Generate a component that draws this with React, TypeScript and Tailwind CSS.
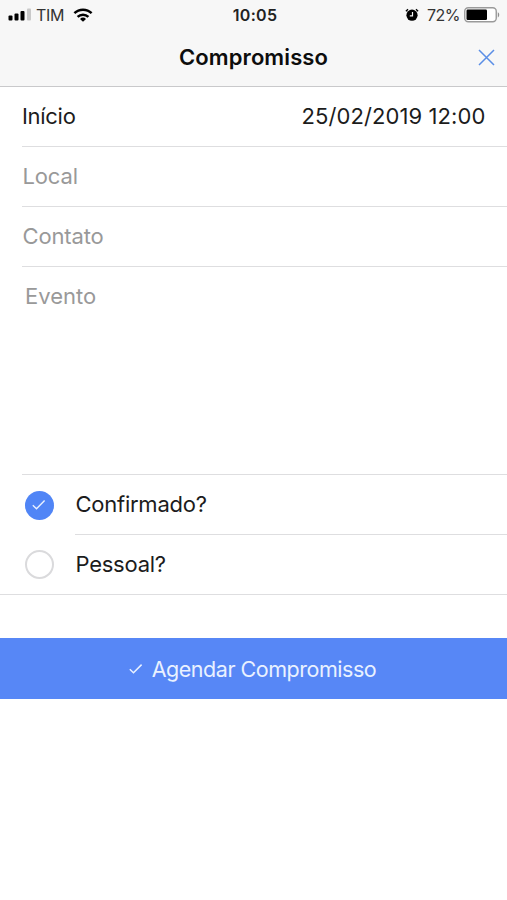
import React from 'react';

function SignalIcon() {
  return (
    <svg width="23" height="13" viewBox="0 0 23 13" aria-hidden="true">
      <rect x="0.5" y="7.5" width="4" height="5" rx="1" fill="#000" />
      <rect x="6.5" y="5.5" width="4" height="7" rx="1" fill="#000" />
      <rect x="12.5" y="3" width="4" height="9.5" rx="1" fill="#000" />
      <rect x="19" y="0.5" width="4" height="12" rx="1" fill="#c9c9c9" />
    </svg>
  );
}

function WifiIcon() {
  return (
    <svg width="20" height="14" viewBox="0 0 20 14" fill="none" stroke="#000" strokeWidth="2.5" aria-hidden="true">
      <path d="M1.4 5.2a12.4 12.4 0 0 1 17.2 0" />
      <path d="M4.6 8.8a7.8 7.8 0 0 1 10.8 0" />
      <path d="M10 13.8 7 10.9a4.3 4.3 0 0 1 6 0z" fill="#000" stroke="none" />
    </svg>
  );
}

function AlarmIcon() {
  return (
    <svg width="14" height="14" viewBox="0 0 14 14" fill="none" aria-hidden="true">
      <circle cx="7" cy="7.2" r="5.6" fill="#000" />
      <path d="M0.9 3.2 3 1.2M13.1 3.2 11 1.2" stroke="#000" strokeWidth="1.3" />
      <path d="M7.5 4v3.8H4.8" stroke="#f7f7f7" strokeWidth="1.2" />
    </svg>
  );
}

function BatteryIcon() {
  return (
    <svg width="36" height="16" viewBox="0 0 36 16" fill="none" aria-hidden="true">
      <rect x="0.75" y="0.75" width="31.5" height="14" rx="3.5" fill="#fff" stroke="#9a9a9a" strokeWidth="1.4" />
      <rect x="2.5" y="2.5" width="20.5" height="10.5" rx="1.2" fill="#000" />
      <path d="M33.8 5.3c1.9.8 1.9 4.3 0 5.1z" fill="#8e8e8e" />
    </svg>
  );
}

function StatusBar() {
  return (
    <div className="grid h-[29px] grid-cols-3 items-center pl-2 pr-[7px] text-base text-[#333]">
      <div className="flex items-center">
        <SignalIcon />
        <span className="ml-[5px] tracking-[-0.3px]">TIM</span>
        <span className="ml-[8.5px]">
          <WifiIcon />
        </span>
      </div>
      <span className="pl-[2px] text-center font-semibold tracking-[0.3px] text-[#222]">10:05</span>
      <div className="flex items-center justify-end">
        <AlarmIcon />
        <span className="ml-[8px] mr-1 tracking-[-0.5px]">72%</span>
        <BatteryIcon />
      </div>
    </div>
  );
}

function Header() {
  return (
    <header className="h-[87px] border-b border-[#c9c9cb] bg-[#f7f7f7]">
      <StatusBar />
      <div className="grid h-[57px] grid-cols-[1fr_auto_1fr] items-center">
        <h1 className="col-start-2 text-[22px] font-semibold tracking-[0.1px] text-[#0d0d0d]">Compromisso</h1>
        <button className="mr-3 justify-self-end" aria-label="Fechar">
          <svg width="17" height="17" viewBox="0 0 17 17" fill="none" stroke="#5a8ee6" strokeWidth="1.5">
            <path d="M1 1l15 15M16 1 1 16" />
          </svg>
        </button>
      </div>
    </header>
  );
}

function Tick({ width }: { width: number }) {
  return (
    <svg width="14" height="14" viewBox="0 0 14 14" fill="none" stroke="#e9f1ff" strokeWidth={width} aria-hidden="true">
      <path d="M0.8 7.2 4.5 10.7 12.6 2.6" />
    </svg>
  );
}

interface OptionProps {
  label: string;
  checked?: boolean;
  divider?: boolean;
}

function Option({ label, checked, divider }: OptionProps) {
  return (
    <label className={`flex items-stretch pl-[25px] ${divider ? 'h-[60px]' : 'h-[59px]'}`}>
      <span className="flex w-[50px] items-center">
        {checked ? (
          <span className="flex size-[29px] items-center justify-center rounded-full bg-[#5085f6] pr-px">
            <Tick width={1.4} />
          </span>
        ) : (
          <span className="size-[29px] rounded-full border-2 border-[#dadadc]" />
        )}
      </span>
      <span
        className={`flex flex-1 items-center pl-[0.5px] tracking-[-0.25px] ${divider ? 'border-b border-[#dedee0]' : ''}`}
      >
        {label}
      </span>
    </label>
  );
}

const fields = ['Local', 'Contato'];

export default function App() {
  return (
    <div className="h-[900px] w-full overflow-hidden bg-white font-['Inter',sans-serif] text-[22px] text-[#1c1c1c]">
      <Header />
      <main>
        <div className="border-b border-[#dedee0]">
          <div className="ml-[22px] flex h-[60px] items-center justify-between border-b border-[#dedee0] pr-[21.5px]">
            <span className="tracking-[-0.3px]">Início</span>
            <span className="tracking-[0.1px]">25/02/2019 12:00</span>
          </div>
          {fields.map((field) => (
            <div
              key={field}
              className="ml-[22px] flex h-[60px] items-center border-b border-[#dedee0] pl-[0.5px] tracking-[-0.15px] text-[#999]"
            >
              {field}
            </div>
          ))}
          <div className="ml-[22px] h-[208px] border-b border-[#dedee0] pl-[3px] pt-[13px] text-[#999]">Evento</div>
          <Option label="Confirmado?" checked divider />
          <Option label="Pessoal?" />
        </div>
        <button className="mt-[43px] flex h-[61px] w-full items-center justify-center bg-[#5787f6] pr-[2px] text-[#e9f1ff]">
          <span className="mr-[9px]">
            <Tick width={1.5} />
          </span>
          <span className="pt-px text-[21.5px] tracking-[-0.47px]">Agendar Compromisso</span>
        </button>
      </main>
    </div>
  );
}
